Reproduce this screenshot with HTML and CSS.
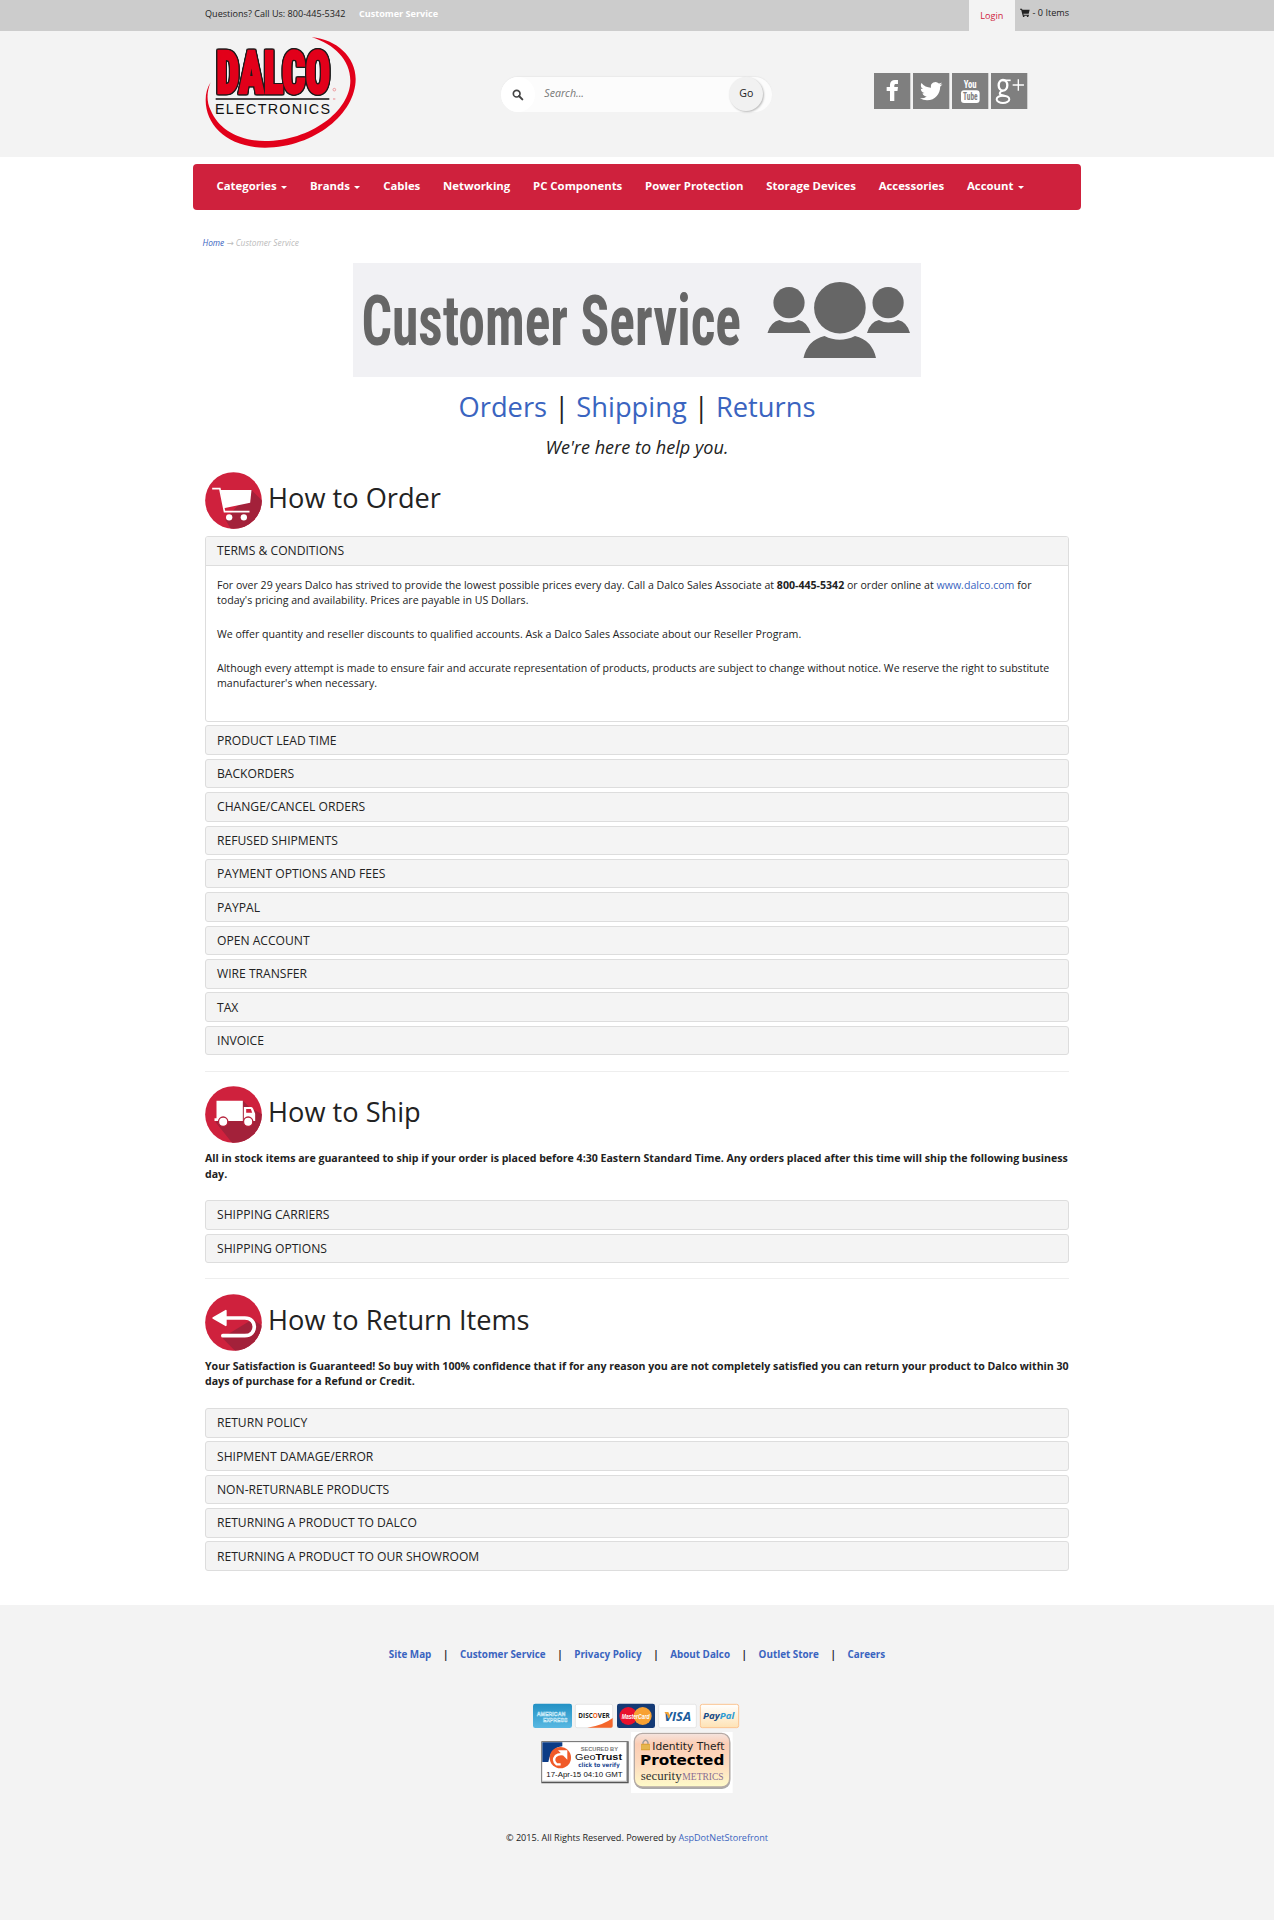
FILE: index.html
```
<!DOCTYPE html>
<html lang="en">
<head>
<meta charset="utf-8">
<title>Customer Service | Dalco Electronics</title>
<link rel="stylesheet" href="styles.css">
</head>
<body>
<div class="topbar">
  <div class="wrap">
    <span class="phone">Questions? Call Us: 800-445-5342</span>
    <a class="top-link" href="#">Customer Service</a>
    <a class="login" href="#">Login</a>
    <a class="cart" href="#"><svg width="10" height="9" viewBox="0 0 30 27"><path d="M0 2h6l1 3h22l-3 12H10l1 3h16v3H8L3.500 5H0z" fill="#222"/><circle cx="11" cy="24.500" r="2.500" fill="#222"/><circle cx="23" cy="24.500" r="2.500" fill="#222"/></svg>- 0 Items</a>
  </div>
</div>
<header class="header">
  <div class="wrap">
    <svg class="logo" width="153.330" height="115" viewBox="45 108 460 345">
      <path d="M365 112C440 118 497 172 497 237C497 340 375 442 225 443C115 442 47 378 47 300C47 280 52 262 62 247C50 275 49 305 62 331C86 388 145 423 225 423C360 423 481 333 481 242C481 180 432 132 365 112Z" fill="#e2001a"/>
      <text class="logo-name" x="79" y="280" textLength="342" lengthAdjust="spacingAndGlyphs">DALCO</text>
      <path d="M77 297H418" stroke="#111" stroke-width="4"/>
      <text class="logo-sub" x="75" y="341" textLength="345" lengthAdjust="spacing">ELECTRONICS</text>
      <circle cx="433" cy="269" r="4" fill="none" stroke="#e8505a" stroke-width="1.500"/>
      <path d="M429 297h7" stroke="#e8505a" stroke-width="2"/>
    </svg>
    <form class="search">
      <span class="search-icon"><svg width="12" height="12" viewBox="0 0 36 36"><circle cx="14" cy="14" r="10" fill="none" stroke="#444" stroke-width="5"/><path d="M21 21l10 10" stroke="#444" stroke-width="6" stroke-linecap="round"/></svg></span>
      <span class="search-text">Search...</span>
      <button class="go" type="button">Go</button>
    </form>
    <div class="social">
      <svg width="36.300" height="36.300" viewBox="0 0 109 109"><path fill="#7f7f7f" d="M0 0h109v109H0z"/><path fill="#fff" d="M48 84V54H38V42h10v-7c0-9 6-14 15-14h9v12h-6c-4 0-5 2-5 5v4h11l-1.500 12H61v30z"/></svg>
      <svg width="36.300" height="36.300" viewBox="0 0 24 24"><path fill="#7f7f7f" d="M0 0h24v24H0z"/><path fill="#fff" transform="translate(4.600 4.600) scale(.62)" d="M23.950 4.570a10 10 0 0 1-2.820.770 4.960 4.960 0 0 0 2.160-2.720c-.950.550-2 .950-3.130 1.180a4.920 4.920 0 0 0-8.380 4.480C7.690 8.090 4.070 6.130 1.640 3.160a4.820 4.820 0 0 0-.670 2.480c0 1.700.870 3.210 2.190 4.090a4.900 4.900 0 0 1-2.230-.610v.060a4.920 4.920 0 0 0 3.950 4.830 5 5 0 0 1-2.210.080 4.940 4.940 0 0 0 4.600 3.420A9.870 9.870 0 0 1 0 19.540a13.990 13.990 0 0 0 7.550 2.210c9.050 0 14-7.500 14-13.980 0-.210 0-.420-.020-.630a9.940 9.940 0 0 0 2.460-2.550z"/></svg>
      <svg width="36.300" height="36.300" viewBox="0 0 109 109"><path fill="#7f7f7f" d="M0 0h109v109H0z"/><text class="yt" x="35" y="46" textLength="39" lengthAdjust="spacingAndGlyphs" fill="#fff">You</text><rect x="27" y="52" width="56" height="38" rx="9" fill="#fff"/><text class="yt" x="33" y="82" textLength="44" lengthAdjust="spacingAndGlyphs" fill="#7f7f7f">Tube</text></svg>
      <svg width="36.300" height="36.300" viewBox="0 0 109 109"><path fill="#7f7f7f" d="M0 0h109v109H0z"/><g fill="none" stroke="#fff"><ellipse cx="36" cy="37" rx="13" ry="16" stroke-width="7"/><ellipse cx="36" cy="79" rx="19" ry="11" stroke-width="6"/><path d="M35 22h24" stroke-width="5"/><path d="M36 53c-13 4-12 12-2 14l8 2" stroke-width="6"/><path d="M65 36h34M82 19v34" stroke-width="4"/></g></svg>
    </div>
  </div>
</header>
<nav class="nav">
  <a href="#">Categories <b class="caret"></b></a><a href="#">Brands <b class="caret"></b></a><a href="#">Cables</a><a href="#">Networking</a><a href="#">PC Components</a><a href="#">Power Protection</a><a href="#">Storage Devices</a><a href="#">Accessories</a><a href="#">Account <b class="caret"></b></a>
</nav>
<main class="main">
  <div class="crumbs"><a href="#">Home</a> <span class="arrow">→</span> Customer Service</div>
  <svg class="banner" width="568.500" height="114" viewBox="352.500 263 568.500 114">
    <path fill="#f1f1f4" d="M352 263h570v114H352z"/>
    <g fill="#666">
      <text class="banner-title" x="361" y="345" textLength="379.500" lengthAdjust="spacingAndGlyphs">Customer Service</text>
      <ellipse cx="788.500" cy="302.700" rx="15.600" ry="15.600"/><ellipse cx="887.600" cy="302.700" rx="15.600" ry="15.600"/>
      <ellipse cx="839.400" cy="307.700" rx="25.800" ry="25.800"/>
      <path d="M767 333q3-11 12-13q9.500 5 19 0q9 2 12 13zM866.500 333q3-11 12-13q9.500 5 19 0q9 2 12 13z"/>
      <path d="M803 358q4-18 21-22q15 7.500 30.500 0q17 4 21 22z"/>
    </g>
  </svg>
  <p class="jump"><a href="#orders">Orders</a> | <a href="#shipping">Shipping</a> | <a href="#returns">Returns</a></p>
  <p class="tagline">We're here to help you.</p>

  <section id="orders">
    <div class="title">
      <svg width="57" height="57" viewBox="45 35 170 171"><defs><clipPath id="c1"><circle cx="130" cy="120.500" r="85"/></clipPath></defs><circle cx="130" cy="120.500" r="85" fill="#cf213d"/><path clip-path="url(#c1)" fill="#a3213a" d="M183 88l60 60v90H140l-34-60z"/><path d="M66 85h23l14 69h75" fill="none" stroke="#fff" stroke-width="5"/><path d="M91 89h93l-4 38-79 17z" fill="#fff"/><circle cx="117" cy="171" r="9.500" fill="#fff"/><circle cx="161" cy="171" r="9.500" fill="#fff"/></svg>
      <h1>How to Order</h1>
    </div>
    <div class="panels">
      <div class="panel open">
        <div class="head">TERMS &amp; CONDITIONS</div>
        <div class="body">
          <p>For over 29 years Dalco has strived to provide the lowest possible prices every day. Call a Dalco Sales Associate at <b>800-445-5342</b> or order online at <a href="#">www.dalco.com</a> for<br>today's pricing and availability. Prices are payable in US Dollars.</p>
          <p>We offer quantity and reseller discounts to qualified accounts. Ask a Dalco Sales Associate about our Reseller Program.</p>
          <p>Although every attempt is made to ensure fair and accurate representation of products, products are subject to change without notice. We reserve the right to substitute<br>manufacturer's when necessary.</p>
        </div>
      </div>
      <div class="panel"><div class="head">PRODUCT LEAD TIME</div></div>
      <div class="panel"><div class="head">BACKORDERS</div></div>
      <div class="panel"><div class="head">CHANGE/CANCEL ORDERS</div></div>
      <div class="panel"><div class="head">REFUSED SHIPMENTS</div></div>
      <div class="panel"><div class="head">PAYMENT OPTIONS AND FEES</div></div>
      <div class="panel"><div class="head">PAYPAL</div></div>
      <div class="panel"><div class="head">OPEN ACCOUNT</div></div>
      <div class="panel"><div class="head">WIRE TRANSFER</div></div>
      <div class="panel"><div class="head">TAX</div></div>
      <div class="panel"><div class="head">INVOICE</div></div>
    </div>
  </section>
  <hr>
  <section id="shipping">
    <div class="title">
      <svg width="57" height="57" viewBox="45 80 170 171"><defs><clipPath id="c2"><circle cx="130" cy="165.500" r="85"/></clipPath></defs><circle cx="130" cy="165.500" r="85" fill="#cf213d"/><path clip-path="url(#c2)" fill="#a3213a" d="M158 124l20 20 40 22v100h-80l-62-78z"/><path fill="#fff" d="M79 124h79v61H73v-8h6zM161 143h22q4 0 6 5l6 15v22h-34z"/><path d="M168 149h14l4 11h-18z" fill="#cf213d"/><g fill="#fff" stroke="#b5213b" stroke-width="4"><circle cx="99" cy="187" r="14"/><circle cx="174" cy="187" r="14"/></g></svg>
      <h1>How to Ship</h1>
    </div>
    <p class="lead">All in stock items are guaranteed to ship if your order is placed before 4:30 Eastern Standard Time. Any orders placed after this time will ship the following business<br>day.</p>
    <div class="panels">
      <div class="panel"><div class="head">SHIPPING CARRIERS</div></div>
      <div class="panel"><div class="head">SHIPPING OPTIONS</div></div>
    </div>
  </section>
  <hr>
  <section id="returns">
    <div class="title">
      <svg width="57" height="57" viewBox="45 102 170 171"><defs><clipPath id="c3"><circle cx="130" cy="187.500" r="85"/></clipPath></defs><circle cx="130" cy="187.500" r="85" fill="#cf213d"/><path clip-path="url(#c3)" fill="#a3213a" d="M187 178l60 40v60H140l-44-45z"/><path d="M106 174h58c38 0 38 53 0 53H98" fill="none" stroke="#fff" stroke-width="11" stroke-linecap="round"/><path d="M69 174l38-22v44z" fill="#fff" stroke="#fff" stroke-width="5" stroke-linejoin="round"/></svg>
      <h1>How to Return Items</h1>
    </div>
    <p class="lead">Your Satisfaction is Guaranteed! So buy with 100% confidence that if for any reason you are not completely satisfied you can return your product to Dalco within 30<br>days of purchase for a Refund or Credit.</p>
    <div class="panels">
      <div class="panel"><div class="head">RETURN POLICY</div></div>
      <div class="panel"><div class="head">SHIPMENT DAMAGE/ERROR</div></div>
      <div class="panel"><div class="head">NON-RETURNABLE PRODUCTS</div></div>
      <div class="panel"><div class="head">RETURNING A PRODUCT TO DALCO</div></div>
      <div class="panel"><div class="head">RETURNING A PRODUCT TO OUR SHOWROOM</div></div>
    </div>
  </section>
</main>
<footer class="footer">
  <div class="foot-links"><a href="#">Site Map</a><i>|</i><a href="#">Customer Service</a><i>|</i><a href="#">Privacy Policy</a><i>|</i><a href="#">About Dalco</a><i>|</i><a href="#">Outlet Store</a><i>|</i><a href="#">Careers</a></div>
  <svg class="badges" width="234" height="110" viewBox="0 0 702 330">
    <defs>
      <linearGradient id="ax" x2="0" y2="1"><stop offset="0" stop-color="#2391c4"/><stop offset="1" stop-color="#58b8e2"/></linearGradient>
      <linearGradient id="pp" x2="0" y2="1"><stop offset="0" stop-color="#fff"/><stop offset="1" stop-color="#fee2b4"/></linearGradient>
      <linearGradient id="sm" x2="0" y2="1"><stop offset="0" stop-color="#f4e4df"/><stop offset=".2" stop-color="#fbcdb4"/><stop offset=".6" stop-color="#fddcc0"/><stop offset="1" stop-color="#fffbc8"/></linearGradient>
    </defs>
    <rect x="39" y="41" width="117" height="73" rx="7" fill="url(#ax)"/>
    <g class="amex"><text x="50" y="77" textLength="86" lengthAdjust="spacingAndGlyphs">AMERICAN</text><text x="69" y="95" textLength="73" lengthAdjust="spacingAndGlyphs">EXPRESS</text></g>
    <rect x="166" y="43" width="112" height="70" rx="5" fill="#fff" stroke="#ddd" stroke-width="2"/>
    <path d="M202 113Q250 106 278 84v24q0 5-5 5z" fill="#f4662b"/>
    <text class="disc" x="175" y="83" textLength="94" lengthAdjust="spacingAndGlyphs">DISC<tspan fill="#f26522">O</tspan>VER</text>
    <rect x="291" y="41" width="114" height="73" rx="7" fill="#143a75"/>
    <circle cx="325" cy="78" r="27" fill="#e8112d"/><circle cx="368" cy="78" r="27" fill="#f8a133"/>
    <text class="mc" x="305" y="86" textLength="84" lengthAdjust="spacingAndGlyphs">MasterCard</text>
    <rect x="416" y="43" width="113" height="70" rx="5" fill="#fff" stroke="#ddd" stroke-width="2"/>
    <text class="visa" x="433" y="93" textLength="80" lengthAdjust="spacingAndGlyphs">VISA</text><path d="M433 66h12l5 12-3 9q-5-15-14-21z" fill="#f3a533"/>
    <rect x="541" y="43" width="115" height="70" rx="6" fill="url(#pp)" stroke="#fbc491" stroke-width="3"/>
    <text class="paypal" x="549" y="87" textLength="94" lengthAdjust="spacingAndGlyphs" fill="#174a86">Pay<tspan fill="#2c9bd4">Pal</tspan></text>

    <path d="M64 154h262v126H64z" fill="#555"/><path d="M66 156h256v120H66z" fill="#bbb"/><path d="M67 157h251v115H67z" fill="#fff"/>
    <path d="M67 157h60v12q-34 3-42 47H67z" fill="#0b3c86"/>
    <circle cx="121" cy="203" r="32" fill="#f05a28"/>
    <path d="M122 223h-12q-14-12-3-25q8-7 22-5" fill="none" stroke="#fff" stroke-width="7"/><path d="M114 181h28v28z" fill="#fff"/>
    <text class="sec" x="182" y="183" textLength="112" lengthAdjust="spacingAndGlyphs">SECURED BY</text>
    <text class="geo" x="165" y="210" textLength="141" lengthAdjust="spacingAndGlyphs">Geo<tspan font-weight="bold">Trust</tspan></text>
    <text class="verify" x="175" y="232" textLength="124" lengthAdjust="spacingAndGlyphs">click to verify</text>
    <text class="date" x="79" y="262" textLength="229" lengthAdjust="spacingAndGlyphs">17-Apr-15 04:10 GMT</text>

    <path d="M333 126h305v183H333z" fill="#fff"/>
    <rect x="343" y="133" width="288" height="164" rx="25" fill="#aaa"/><rect x="343" y="130" width="286" height="161" rx="24" fill="url(#sm)" stroke="#b5aaa5" stroke-width="4"/>
    <path d="M369 163v-6q8-14 15 0v6" fill="none" stroke="#999" stroke-width="4"/><rect x="363" y="161" width="27" height="20" rx="2" fill="#dda43a"/><path d="M364 168h25M364 174h25" stroke="#f6db7a" stroke-width="2"/>
    <text class="idt" x="397" y="179" textLength="216" lengthAdjust="spacingAndGlyphs">Identity Theft</text>
    <text class="prot" x="360" y="225" textLength="253" lengthAdjust="spacingAndGlyphs">Protected</text>
    <text class="secm" x="362" y="271" textLength="123" lengthAdjust="spacingAndGlyphs" fill="#333">security</text>
    <text class="metr" x="487" y="271" textLength="124" lengthAdjust="spacingAndGlyphs" fill="#8a6d92">METRICS</text>
  </svg>
  <p class="copy">© 2015. All Rights Reserved. Powered by <a href="#">AspDotNetStorefront</a></p>
</footer>
</body>
</html>
```
FILE: styles.css
```
* { box-sizing: border-box; }
body { margin: 0; background: #fff; color: #222; font: 10.6px/15.14px "Open Sans", "Noto Sans", sans-serif; }
a { color: #3a64c0; text-decoration: none; }
p, h1 { margin: 0; font-weight: normal; }
svg { display: block; flex: none; }
.wrap { width: 864px; margin: 0 auto; display: flex; }

.topbar { height: 31px; background: #ccc; font-size: 9.09px; line-height: 14px; }
.topbar .wrap { height: 31px; }
.phone { padding-top: 7px; width: 154px; }
.top-link { padding-top: 7px; color: #fff; font-weight: bold; }
.login { margin-left: auto; width: 46.5px; padding-top: 9px; text-align: center; background: #f3f3f3; color: #cf213d; }
.cart { display: flex; gap: 2.5px; margin-left: 5px; padding-top: 6px; color: #222; }
.cart svg { margin-top: 2px; }

.header { height: 126px; background: #f3f3f3; }
.header .wrap { align-items: flex-start; }
.logo { margin-top: 5px; overflow: visible; }
.logo-name { font: 900 177px "Roboto Condensed", Roboto, sans-serif; fill: #e2001a; stroke: #e2001a; stroke-width: 7px; filter: drop-shadow(3px 0 0 #1a1a1a) drop-shadow(-3px 0 0 #1a1a1a) drop-shadow(0 3px 0 #1a1a1a) drop-shadow(0 -3px 0 #1a1a1a); }
.logo-sub { font: 43px "Liberation Sans", Arial, sans-serif; fill: #111; }
.search { display: flex; width: 271px; height: 35px; margin: 46px 0 0 143px; border-radius: 18px; background: #fcfcfc; box-shadow: 0 -1px 1px #eaeaea; }
.search-icon { width: 34px; height: 35px; border-radius: 50%; background: #fff; display: flex; align-items: center; justify-content: center; }
.search-text { flex: 1; padding-left: 9px; line-height: 33px; font-style: italic; color: #777; }
.go { width: 34px; height: 34px; margin-right: 9px; padding: 0 0 3px; border: 0; border-radius: 50%; background: #f1f1f1; box-shadow: 1px 1px 2px #bbb; color: #222; font: 10.6px "Open Sans", sans-serif; }
.social { display: flex; gap: 2.7px; margin: 41.5px 0 0 102px; }
.yt { font: bold 34px "Roboto Condensed", Roboto, sans-serif; }

.nav { width: 888px; height: 46px; margin: 7px auto 0; padding: 0 23.5px 2px; display: flex; align-items: center; gap: 22.8px; border-radius: 4px; background: #cf213d; font-size: 11.36px; font-weight: bold; }
.nav a { color: #fff; white-space: nowrap; }
.caret { display: inline-block; margin-left: 1.5px; vertical-align: middle; border: 3px solid transparent; border-top-color: #fff; border-bottom: 0; }

.main { width: 864px; margin: 0 auto; height: 1395px; padding-top: 27px; }
.crumbs { height: 12px; margin-left: -2.500px; font-size: 8.33px; line-height: 12px; font-style: italic; color: #bbb; }
.arrow { font-family: "DejaVu Sans", sans-serif; font-style: normal; font-size: 8.5px; }
.banner { margin: 14px auto 15px; }
.jump { height: 44.5px; font-size: 27.3px; line-height: 30px; text-align: center; }
.tagline { height: 35px; font-size: 18.1px; line-height: 20px; font-style: italic; text-align: center; }

.title { display: flex; gap: 6px; height: 57px; }
h1 { margin-top: 11px; font-size: 27.2px; line-height: 30px; }
.lead { margin: 8px 0 18.5px; font-weight: bold; white-space: nowrap; }
.panels { display: flex; flex-direction: column; gap: 3.780px; }
.title + .panels { margin-top: 7.500px; }
.panel { height: 29.6px; border: 1px solid #ddd; border-radius: 3px; background: #f4f4f4; overflow: hidden; }
.head { height: 28.6px; padding: 5.3px 11px 0; font-size: 12.11px; line-height: 18px; }
.open { height: 185.700px; background: #fff; }
.open .head { height: 29px; background: #f4f4f4; border-bottom: 1px solid #ddd; }
.body { padding: 12px 11px 0; white-space: nowrap; }
.body p { margin-bottom: 18.9px; }
hr { height: 1px; margin: 15.4px 0 14.7px; border: 0; background: #eee; }

.footer { height: 315px; padding-top: 42px; background: #f3f3f3; }
.foot-links { display: flex; justify-content: center; height: 43px; font-size: 9.86px; font-weight: bold; }
.foot-links i { width: 28.6px; text-align: center; font-style: normal; }
.badges { margin: 0 auto; }
.copy { margin-top: 30px; font-size: 9.09px; text-align: center; }

.banner-title { font: bold 71px "Roboto Condensed", Roboto, sans-serif; }
.amex { font: bold 18px "Liberation Sans", sans-serif; fill: #3ba2d2; stroke: #d8f1fb; stroke-width: 1.500px; }
.disc { font: bold 23px "Open Sans", sans-serif; fill: #222; }
.mc { font: italic bold 20px "Liberation Sans", sans-serif; fill: #fff; }
.visa { font: italic bold 38px "Open Sans", sans-serif; fill: #1c5c9c; }
.paypal { font: italic bold 27px "Open Sans", sans-serif; }
.sec { font: bold 17px "Liberation Sans", sans-serif; fill: #777; }
.geo { font: 29px "Liberation Sans", sans-serif; fill: #111; }
.verify { font: bold 18px "DejaVu Sans", sans-serif; fill: #1e4a93; }
.date { font: 21px "Liberation Sans", sans-serif; fill: #111; }
.idt { font: 29px "DejaVu Sans", sans-serif; fill: #222; }
.prot { font: bold 42px "DejaVu Sans", sans-serif; fill: #000; }
.secm { font: 36px "Liberation Serif", serif; }
.metr { font: 28px "Liberation Serif", serif; }
```
